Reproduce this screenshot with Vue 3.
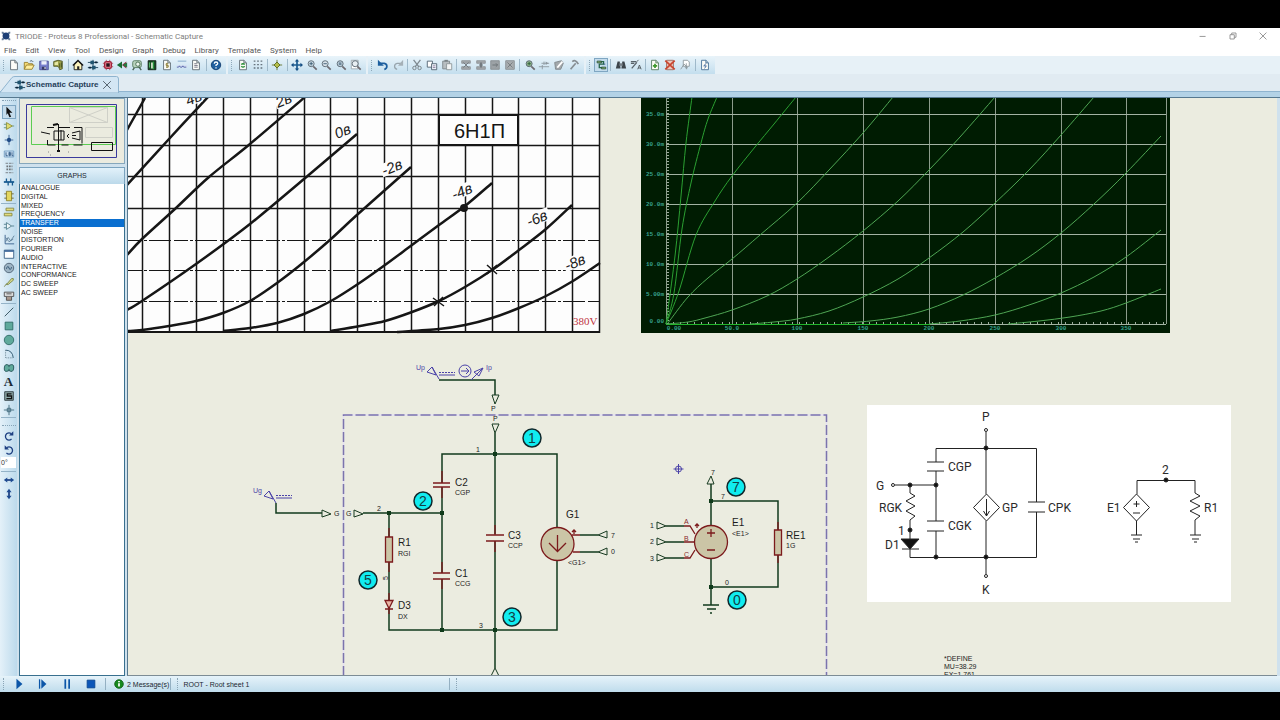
<script setup>
import { ref } from 'vue'

const glass = (x, mark) => `<circle cx="6" cy="5.500" r="3.500" fill="${x}" stroke="#55646e"/><path d="M8.500 8.500L12.500 12.500" stroke="#6d6a70" stroke-width="2"/>${mark}`
const sheet = (mark, c = '#59666e') => `<path d="M3 1.500h5l3 3v8H3z" fill="#fdfdf8" stroke="${c}"/><path d="M8 1.500v3h3" fill="none" stroke="${c}"/>${mark}`
const block = (mark) => `<path d="M2 2h10v3H2zM2 9h10v3H2z" fill="#a2a7ab" stroke="#8d9398"/>${mark}`

const icons = {
  app: '<path d="M3 3l8 8M11 3l-8 8" stroke="#6e86a0" stroke-width="2"/><circle cx="7" cy="7" r="4" fill="#1d3f76"/><path d="M2 2h2v2H2zM10 2h2v2h-2zM2 10h2v2H2zM10 10h2v2h-2z" fill="#6a7f9c"/>',
  file: sheet(''),
  open: '<path d="M1.500 12V4h4l1 1.500H11V7" fill="#f6dc78" stroke="#937b28"/><path d="M1.500 12L4 7h9l-2.500 5z" fill="#ffef9e" stroke="#937b28"/><path d="M8 2.500q3-1.500 4 1" fill="none" stroke="#4c6274"/>',
  save: '<path d="M2 2.500h10v10H2z" fill="#7a80cf" stroke="#4a4d93"/><path d="M4 2.500h6v4H4z" fill="#eef0fb"/><path d="M4.500 9h5v3.500h-5z" fill="#373a66"/><path d="M7.500 9.500h1.500v2h-1.500z" fill="#fff"/>',
  shut: '<path d="M2 3l5-1.500 5 1v9l-3 1-1-3-2-1H2z" fill="#9da24b" stroke="#4e5424"/><path d="M3 4l4-1v4H3z" fill="#e5e7a6"/><path d="M9 5v5M11 4v6" stroke="#3f4c20"/>',
  home: '<path d="M2.500 7L7 2.500 11.500 7v5.500h-9z" fill="#fbf3bd" stroke="#111"/><path d="M1 7.500L7 1.500l6 6" fill="none" stroke="#111" stroke-width="1.500"/><path d="M6 8.500h2.500v4H6z" fill="#222"/>',
  schem: '<path d="M1 4h12M1 10h12M7 1v12" stroke="#153d55"/><path d="M4 2h4v4H4zM6 8h4v4H6z" fill="#1f5470"/><path d="M9 4h3M2 10h3" stroke="#0c2438" stroke-width="2"/>',
  pcb: '<rect x="3" y="3" width="8" height="8" rx="2" fill="#e88391" stroke="#9d1e36" stroke-width="1.500"/><rect x="5" y="5" width="4" height="4" fill="#26121a"/><path d="M1 5h2M1 9h2M11 5h2M11 9h2M5 1v2M9 1v2M5 11v2M9 11v2" stroke="#a9475a"/>',
  view3d: '<path d="M1 7l6-4v8z" fill="#176d33"/><path d="M7 7l5-4v8z" fill="#8f3142"/><path d="M8 7l5-3v6z" fill="#247c42"/>',
  gerber: '<rect x="2" y="2" width="10" height="8" rx="2" fill="#b8d3bd" stroke="#4f7659"/><circle cx="8" cy="6" r="2.500" fill="#eef7ee" stroke="#3d6547"/><path d="M4 10l-2 3M9 9l3 4" stroke="#476251" stroke-width="1.500"/>',
  explore: '<path d="M2.500 2h9v10.500h-9z" fill="#174b25" stroke="#0b190e"/><path d="M6 4h2v7H6z" fill="#e7f0dc"/><path d="M8.500 3v9" stroke="#2fb649"/><path d="M4 4v6" stroke="#63cc76"/>',
  bom: sheet('<path d="M8.500 5.500H6v2h2.500v2H6M7 4.500v6" fill="none" stroke="#8a7b31"/>'),
  code: '<path d="M2 2.500h10" stroke="#7ba0c5"/><path d="M1 7h12v3H1z" fill="#d5e0f2"/><path d="M1 9.500h2l1-1.500 1 1.500h2l1-1.500 1 1.500h3" fill="none" stroke="#4d5ca5"/>',
  notes: sheet('<path d="M5 5.500h3M5 7.500h4M5 9.500h4" stroke="#667"/>'),
  help: '<circle cx="7" cy="7" r="5.500" fill="#1f5f9f" stroke="#0d386b"/><path d="M5 5.500q0-2 2-2t2 1.700q0 1.200-2 2v1M7 9.500v1.500" fill="none" stroke="#fff" stroke-width="1.500"/>',
  redraw: sheet('<path d="M5 6.500q2-2 4 0M9 8.500q-2 2-4 0" fill="none" stroke="#268a32" stroke-width="1.500"/>'),
  grid: '<path d="M2 2.500h11M2 6.500h11M2 10.500h11" stroke="#66737d" stroke-width="1.500" stroke-dasharray="2 2"/>',
  origin: '<path d="M7 1v12M1 7h12" stroke="#5d6f22"/><path d="M7 3.500L10.500 7 7 10.500 3.500 7z" fill="#b2bc49" stroke="#56651e"/>',
  pan: '<path d="M7 2v10M2 7h10" stroke="#1d5c91" stroke-width="2"/><path d="M7 0l2.500 3h-5zM7 14l2.500-3h-5zM0 7l3-2.500v5zM14 7l-3-2.500v5z" fill="#174f84"/>',
  zin: glass('#c8d9e4', '<path d="M4 5.500h4M6 3.500v4" stroke="#35566d"/>'),
  zout: glass('#d8e1e8', '<path d="M4 5.500h4" stroke="#35566d"/>'),
  zall: glass('#b9cbd8', '<path d="M4.500 4h3v3h-3z" fill="#6e8799"/>'),
  zarea: `<path d="M1.500 1.500h8v10h-8z" fill="#fff" stroke="#98a3aa"/>${glass('#e8eef2', '')}`,
  undo: '<path d="M3 5h5.500q3 .5 3 3.500t-3 3.500" fill="none" stroke="#1d5f9f" stroke-width="2"/><path d="M1 1v7h7z" fill="#1d5f9f"/>',
  redo: '<path d="M11 5H6q-3 .5-3 3.500t3 3.500" fill="none" stroke="#98a5ad" stroke-width="1.500"/><path d="M13 1v7H7z" fill="#a5b0b7"/>',
  cut: '<path d="M3 1l6 8M11 1L5 9" stroke="#7f8a91" stroke-width="1.500"/><circle cx="4" cy="10.500" r="2" fill="none" stroke="#737b80"/><circle cx="10" cy="10.500" r="2" fill="none" stroke="#737b80"/>',
  copy: '<path d="M1.500 2.500h6v7h-6z" fill="#fff" stroke="#4a5b6b"/><path d="M6.500 5.500h6v7h-6z" fill="#eef4fa" stroke="#4a5b6b"/><path d="M8 8h3M8 10h3" stroke="#879"/>',
  paste: '<path d="M2 2.500h8v9H2z" fill="#b8bec1" stroke="#7b8386"/><path d="M4 1h4v2H4z" fill="#7b8386"/><path d="M6.500 5.500h6v7h-6z" fill="#f3f5f5" stroke="#8b9396"/>',
  bcopy: block('<path d="M4 4l6 6M10 4l-6 6" stroke="#6c7378"/>'),
  bmove: block('<path d="M5 7h4M7 4v6" stroke="#6f767b" stroke-width="2"/>'),
  brot: '<path d="M2 2h10v10H2z" fill="#9ca2a6" stroke="#868c90"/><path d="M4 7h6M8 5l2 2-2 2" stroke="#686e73" fill="none"/>',
  bdel: '<path d="M2 2h10v10H2z" fill="#a8adb0" stroke="#868c90"/><path d="M4 4l6 6M10 4l-6 6" stroke="#71777b"/>',
  pick: glass('#8fb48f', '<path d="M4 5.500h4M6 3.500v4" stroke="#2b5b35"/>'),
  make: '<path d="M1 9h12M4 5h9M7 3v4M5 7v5" stroke="#8b969d"/><path d="M9 3v4l3-2z" fill="#8b969d"/>',
  pack: '<path d="M2 4l8-2 2 3-3 7H3z" fill="#a3a9ac" stroke="#7d8488"/><path d="M5 10l6-7" stroke="#fff" stroke-width="2"/>',
  decomp: '<path d="M3 12l6-7" stroke="#878e93" stroke-width="2"/><path d="M5 3q4-3 7 3" fill="none" stroke="#878e93" stroke-width="2"/>',
  auto: '<path d="M5 3h5v3H5v4h5" fill="none" stroke="#26654a" stroke-width="1.500"/><path d="M2.500 2.500h5v2h-5zM7.500 9.500h5v2h-5z" fill="#a9cb76" stroke="#234c34"/><path d="M10 6h2" stroke="#2c4c8c"/>',
  find: '<path d="M3 3h2.500l1 8H1zM8.500 3H11l2 8H7.500z" fill="#3d454b"/><path d="M5 5h4v3H5z" fill="#778087"/>',
  prop: '<path d="M2 11l6-7M1 3h6M1 5h4" stroke="#59636a" stroke-width="1.500"/><path d="M7 4l3-3M9 12l2-5 2 5M9.500 10.500h3" fill="none" stroke="#4d5459"/>',
  sheetAdd: sheet('<path d="M4.500 8h5M7 5.500v5" stroke="#3f9a2e" stroke-width="2"/>', '#4f7758'),
  sheetDel: '<path d="M3 1.500h8v11H3z" fill="#ecc7bd" stroke="#97685c"/><path d="M1.500 2l11 10M12.500 2l-11 10" stroke="#c9452f" stroke-width="2"/>',
  exit: '<path d="M5 1.500h5l2 2v5H5z" fill="#fff" stroke="#8a9499"/><path d="M2 12L6 6l3 3v3" fill="none" stroke="#8a9499"/><path d="M8.500 5v6M7 9.500L8.500 11 10 9.500" fill="none" stroke="#8a9499"/>',
  erc: sheet('<path d="M8.500 5L5.500 8h3l-2 3" fill="none" stroke="#335c92"/>', '#3f6b92'),
  arrow: '<path d="M4 1l7 7H7.500l2 4.500-2 .5-2-4.500L4 10.500z" fill="#111"/>',
  comp: '<path d="M4 3l7 4-7 4z" fill="#dfdc72" stroke="#8d8c35"/><path d="M1 5h3M1 9h3M11 7h2" stroke="#5f8d7b"/>',
  junc: '<path d="M7 1v12M2 7h10" stroke="#30588c"/><circle cx="7" cy="7" r="2.500" fill="#204b86"/>',
  lbl: '<path d="M1.500 3.500h11v7h-11z" fill="#cde1f5" stroke="#6f9ac0"/><path d="M3.500 5v4h2M7 5v4h1.500V7H7h1.500V5zM10.500 5v4h1.500" fill="none" stroke="#28527d"/>',
  script: '<path d="M3 1.500h9M3 12.500h9" stroke="#6f7477" stroke-dasharray="3 1"/><path d="M4 5h7M4 8.500h7" stroke="#6d7174" stroke-width="2" stroke-dasharray="2 1"/>',
  bus: '<path d="M1 7h12" stroke="#14588f" stroke-width="2"/><path d="M4 3v4M9 3v4M6 7v4M11 7v4" stroke="#14588f" stroke-width="1.500"/>',
  sub: '<path d="M4 1.500h6v11H4z" fill="#e3d65e" stroke="#8a8029"/><path d="M1.500 4.500H4M1.500 9.500H4M10 4.500h2.500M10 9.500h2.500" stroke="#695d20"/>',
  term: '<path d="M3.500 2.500h9v3h-9zM1.500 8.500h9v3h-9z" fill="#e3dc7c" stroke="#85873e"/>',
  pin: '<path d="M4 3l6 4-6 4zM1 5h3M1 9h3M10 7h3" fill="#eef5f8" stroke="#4d7b8a"/>',
  graph: '<path d="M2.500 1v10.500H13" fill="none" stroke="#315a88"/><path d="M3 9l3-5 3 4 4-6M3 4l4 5 5-3" fill="none" stroke="#5c7c95"/>',
  tape: '<path d="M1.500 2.500h11v9.500h-11z" fill="#fff" stroke="#2e567e"/><path d="M1.500 3.500h11" stroke="#3d689a" stroke-width="2"/>',
  gen: '<circle cx="7" cy="7" r="5.500" fill="#9db4c4" stroke="#4c5f72"/><path d="M4 8q1.500-5 3-1t3-1" fill="none" stroke="#284c6c"/>',
  probe: '<path d="M1.500 12.500l3-4M4 10l6-7q3-1 2 2l-6 5z" fill="#d5d98d" stroke="#768244"/>',
  instr: '<path d="M1.500 2.500h11v5h-11z" fill="#dedede" stroke="#494949"/><path d="M4 4.500h6M4 8v4h6V8" fill="#a9988d" stroke="#494949"/>',
  line: '<path d="M2 12L12 2" stroke="#27444f"/>',
  box: '<path d="M2.500 2.500h9v9h-9z" fill="#5faa9c" stroke="#2d6764"/>',
  circle: '<circle cx="7" cy="7" r="5.500" fill="#5faa9c" stroke="#2d6764"/>',
  arc: '<path d="M3 2.500q8 0 9 9" fill="none" stroke="#214b63"/><path d="M3 2.500v9h9" fill="none" stroke="#5d7886" stroke-dasharray="1 1"/>',
  path: '<path d="M7 4q-5-3-5.500 3T7 10q5 3 5.500-3T7 4z" fill="#5faa9c" stroke="#224e54"/><path d="M7 4v2M7 8v2" stroke="#224e54"/>',
  symbol: '<path d="M2 2h10v10H2z" fill="#8ea9a8" stroke="#263238"/><path d="M10 4.500H5v2.500h5v3H4" fill="none" stroke="#111" stroke-width="1.500"/>',
  marker: '<path d="M7 1v12M1 7h12" stroke="#3b6577"/><path d="M5 5h4v4H5z" fill="none" stroke="#3b6577"/>',
  cw: '<path d="M10 10.500q-3 2.500-6 0-2.500-3.500.5-6.500Q7 2.500 9.500 4" fill="none" stroke="#1d3f81" stroke-width="1.500"/><path d="M12 1.500v5h-5z" fill="#1d3f81"/>',
  ccw: '<path d="M4 10.500q3 2.500 6 0 2.500-3.500-.5-6.500Q7 2.500 4.500 4" fill="none" stroke="#1d3f81" stroke-width="1.500"/><path d="M2 1.500v5h5z" fill="#1d3f81"/>',
  fliph: '<path d="M4 7h6" stroke="#1d3f81" stroke-width="2"/><path d="M1 7l4-3v6zM13 7L9 4v6z" fill="#1d4a91"/>',
  flipv: '<path d="M7 4v6" stroke="#1d3f81" stroke-width="2"/><path d="M7 1L4 5h6zM7 13L4 9h6z" fill="#1d4a91"/>',
  play: '<path d="M4 1l7 6-7 6z" fill="#0c56a8"/>',
  step: '<path d="M3 1.500v11" stroke="#0c56a8" stroke-width="1.500"/><path d="M5 1.500l6 5.500-6 5.500z" fill="#0c56a8"/>',
  pause: '<path d="M5 1.500v11M9.500 1.500v11" stroke="#0c56a8" stroke-width="2"/>',
  stop: '<path d="M2.500 2.500h9v9h-9z" fill="#0c56b8" stroke="#0a4690"/>',
  info: '<circle cx="7" cy="7" r="5" fill="#188a1e" stroke="#0d5d13"/><path d="M7 6v4M7 3.500V5" stroke="#fff" stroke-width="2"/>',
  min: '<path d="M3 7.500h7" stroke="#888"/>',
  restore: '<path d="M3.500 5.500h5v5h-5zM5.500 5.500v-2h5v5h-2" fill="none" stroke="#888"/>',
  close: '<path d="M3 3l8 8M11 3l-8 8" stroke="#888"/>',
}

const menus = ['File', 'Edit', 'View', 'Tool', 'Design', 'Graph', 'Debug', 'Library', 'Template', 'System', 'Help']
const strips = [
  { name: 'project', items: 'file open save shut | home schem pcb view3d gerber explore bom code notes | help' },
  { name: 'zoom', items: 'redraw grid | origin | pan zin zout zall zarea' },
  { name: 'edit', items: 'undo redo | cut copy paste | bcopy bmove brot bdel | pick make pack decomp' },
  { name: 'design', items: 'auto | find prop | sheetAdd sheetDel exit | erc' },
].map((s) => ({ name: s.name, items: s.items.split(' ') }))
const tools = 'arrow comp junc lbl script bus sub | term pin graph tape gen probe instr | line box circle arc path text symbol marker |'.split(' ')
const graphs = ['ANALOGUE', 'DIGITAL', 'MIXED', 'FREQUENCY', 'TRANSFER', 'NOISE', 'DISTORTION', 'FOURIER', 'AUDIO', 'INTERACTIVE', 'CONFORMANCE', 'DC SWEEP', 'AC SWEEP']
const selected = ref('TRANSFER')
const angle = ref('0°')

// Smooth line through a list of points (Catmull-Rom to Bezier).
function smooth(p) {
  let d = `M${p[0][0]} ${p[0][1]}`
  for (let i = 0; i < p.length - 1; i++) {
    const a = p[i - 1] || p[i], b = p[i], c = p[i + 1], e = p[i + 2] || c
    d += `C${b[0] + (c[0] - a[0]) / 6} ${b[1] + (c[1] - a[1]) / 6} ${c[0] - (e[0] - b[0]) / 6} ${c[1] - (e[1] - b[1]) / 6} ${c[0]} ${c[1]}`
  }
  return d
}

const scanX = [142, 169, 196, 223, 250, 277, 304, 330, 357, 384, 411, 438, 465, 492, 518, 545, 572, 599]
const scanY = [114, 145, 176, 208]
const scanDash = [240, 270, 301]
const scanCurves = [
  [[127, 130], [145, 98]],
  [[127, 185], [169, 139], [208, 97]],
  [[127, 255], [142, 239], [176, 208], [209, 177], [250, 144], [305, 97]],
  [[127, 310], [142, 301], [196, 264], [250, 224], [304, 179], [357, 134]],
  [[128, 331], [142, 330], [169, 326], [196, 321], [223, 313], [250, 301], [277, 283], [304, 262], [331, 239], [358, 214], [411, 167]],
  [[223, 331], [250, 328], [277, 323], [304, 314], [331, 301], [358, 284], [385, 265], [412, 245], [439, 225], [465, 206], [492, 183]],
  [[331, 331], [360, 326], [385, 321], [412, 312], [439, 301], [465, 287], [492, 270], [519, 250], [546, 229], [572, 205]],
  [[397, 332], [439, 329], [465, 325], [492, 318], [519, 308], [546, 296], [573, 281], [600, 263]],
].map(smooth)
const scanLabels = [
  { t: '4в', x: 188, y: 106 }, { t: '2в', x: 278, y: 108 }, { t: '0в', x: 337, y: 139 },
  { t: '-2в', x: 384, y: 176 }, { t: '-4в', x: 454, y: 200 }, { t: '-6в', x: 529, y: 227 }, { t: '-8в', x: 567, y: 271 },
]
const simX = [666, 732, 797, 863, 929, 995, 1061, 1126, 1166]
const simY = [114, 144, 174, 204, 234, 264, 294, 324]
const simYL = ['35.0m', '30.0m', '25.0m', '20.0m', '15.0m', '10.0m', '5.00m', '0.00']
const simXL = ['0.00', '50.0', '100', '150', '200', '250', '300', '350']
const simCurves = [
  [[666, 324], [675, 256], [681, 196], [686, 143], [692, 97]],
  [[666, 324], [674, 293], [682, 229], [691, 183], [701, 143], [708, 119], [717, 97]],
  [[666, 324], [679, 291], [696, 235], [715, 201], [732, 176], [755, 147], [774, 124], [796, 97]],
  [[668, 323], [688, 297], [708, 278], [732, 259], [760, 235], [797, 203], [829, 170], [863, 133], [893, 97]],
  [[666, 324], [688, 322], [705, 318], [732, 310], [767, 296], [797, 279], [829, 257], [863, 231], [898, 201], [929, 170], [960, 137], [995, 97]],
  [[750, 324], [774, 322], [797, 319], [829, 311], [863, 297], [898, 279], [929, 258], [963, 232], [995, 203], [1029, 170], [1061, 135], [1094, 97]],
  [[843, 323], [870, 321], [898, 317], [929, 309], [963, 295], [995, 278], [1029, 257], [1061, 233], [1094, 204], [1126, 173], [1161, 136]],
  [[929, 324], [960, 321], [995, 315], [1029, 305], [1061, 293], [1094, 277], [1126, 257], [1161, 230]],
  [[1008, 324], [1039, 321], [1070, 317], [1101, 311], [1126, 303], [1161, 289]],
].map(smooth)

const badges = [
  { n: 1, x: 532, y: 438 }, { n: 2, x: 423, y: 501 }, { n: 5, x: 368, y: 580 },
  { n: 3, x: 512, y: 617 }, { n: 7, x: 736, y: 487 }, { n: 0, x: 737, y: 600 },
]
const nodes = [[495, 454], [389, 513], [442, 513], [442, 630], [495, 630], [711, 501], [711, 587]]
const names = [
  ['C2', 455, 486], ['R1', 398, 546], ['C1', 455, 577], ['D3', 398, 609], ['C3', 508, 539],
  ['G1', 566, 518], ['E1', 732, 526], ['RE1', 786, 539],
]
const values = [
  ['CGP', 455, 495], ['RGI', 398, 556], ['CCG', 455, 586], ['DX', 398, 619], ['CCP', 508, 548],
  ['<G1>', 568, 565], ['<E1>', 732, 536], ['1G', 786, 548], ['P', 491, 411], ['P', 493, 421],
  ['G', 334, 516], ['G', 346, 516], ['1', 476, 452], ['2', 377, 511], ['3', 479, 628],
  ['7', 611, 538], ['0', 611, 554], ['1', 650, 528], ['2', 650, 544], ['3', 650, 561],
  ['7', 711, 475], ['7', 721, 499], ['0', 725, 585],
  ['*DEFINE', 944, 661], ['MU=38.29', 944, 669], ['EX=1.761', 944, 677],
]
const circuit = [
  ['P', 982, 421], ['CGP', 948, 471], ['G', 876, 490], ['RGK', 879, 512], ['CGK', 948, 530],
  ['1', 898, 535], ['D1', 885, 549], ['GP', 1002, 512], ['CPK', 1048, 512], ['K', 982, 594],
  ['2', 1162, 474], ['E1', 1107, 512], ['R1', 1204, 512],
]
</script>

<template>
  <div class="screen">
    <header class="title">
      <svg class="ico" viewBox="0 0 14 14" v-html="icons.app" />
      <span class="caption">TRIODE - Proteus 8 Professional - Schematic Capture</span>
      <button v-for="b in ['min', 'restore', 'close']" :key="b" class="win" :aria-label="b">
        <svg class="ico" viewBox="0 0 14 14" v-html="icons[b]" />
      </button>
    </header>
    <nav class="menu">
      <button v-for="m in menus" :key="m">{{ m }}</button>
    </nav>
    <div class="toolbar">
      <div v-for="s in strips" :key="s.name" class="strip" :class="s.name">
        <template v-for="(i, k) in s.items" :key="k">
          <i v-if="i === '|'" class="vsep" />
          <button v-else class="tool" :class="{ on: i === 'auto' }" :aria-label="i">
            <svg class="ico" viewBox="0 0 14 14" v-html="icons[i]" />
          </button>
        </template>
      </div>
    </div>
    <div class="tabs">
      <div class="tab">
        <svg class="tabshape" viewBox="0 0 120 17"><path d="M0 16.500L12 1.500Q13 .5 15 .5H116.500Q118.500 .5 118.500 3V17H0z" fill="#d3e6f4" stroke="#8fb4cf" /></svg>
        <button class="tabname"><svg class="ico" viewBox="0 0 14 14" v-html="icons.schem" />Schematic Capture</button>
        <button class="tabx" aria-label="Close tab"><svg class="ico" viewBox="0 0 14 14"><path d="M2.500 2.500l9 9M11.500 2.500l-9 9" stroke="#45525c" /></svg></button>
      </div>
    </div>

    <main class="work">
      <aside class="side">
        <i class="hgrip" />
        <template v-for="(i, k) in tools" :key="k">
          <i v-if="i === '|'" class="hsep" />
          <button v-else class="tool" :class="{ on: i === 'arrow' }" :aria-label="i">
            <span v-if="i === 'text'" class="letter">A</span>
            <svg v-else class="ico" viewBox="0 0 14 14" v-html="icons[i]" />
          </button>
        </template>
        <i class="hgrip low" />
        <button v-for="i in ['cw', 'ccw']" :key="i" class="tool" :aria-label="i"><svg class="ico" viewBox="0 0 14 14" v-html="icons[i]" /></button>
        <input v-model="angle" class="angle" aria-label="Angle" />
        <i class="hsep" />
        <button v-for="i in ['fliph', 'flipv']" :key="i" class="tool" :aria-label="i"><svg class="ico" viewBox="0 0 14 14" v-html="icons[i]" /></button>
      </aside>

      <section class="panel">
        <svg class="overview" viewBox="19 98 106 66" fill="none">
          <path d="M69.500 107.500h38v15h-38zl38 15m0-15l-38 15M85.500 127.500h27v10h-27z" stroke="#cfd0c8" />
          <path d="M26.500 104.500h90v53h-90z" stroke="#3a3a9c" />
          <path d="M31.500 106.500h84v38h-84z" stroke="#5ccc52" />
          <path d="M91.500 142.500h21v8h-21z" stroke="#111" />
          <path d="M47 127.500h7m4 0h12m4 0h8v16M47.500 140v5h8m6 0h7m5 0h9M41 132l9 2M54 131h10v9h-10zM58.500 124v27M61 130v10M69 134l-2 2 2 2M72 133l8-2v9l-8-2M72 135.500h4" stroke="#111" />
          <path d="M53 125l5-1M57 151h3" stroke="#111" stroke-width="2" />
          <path d="M48 152h1m1 3h1m17-3h1" stroke="#888" />
        </svg>
        <h2>GRAPHS</h2>
        <div class="listbox">
          <ul>
            <li v-for="g in graphs" :key="g"><button :class="{ sel: g === selected }" @click="selected = g">{{ g }}</button></li>
          </ul>
        </div>
      </section>

      <svg class="canvas" role="img" aria-label="Schematic sheet">
        <g transform="translate(-128 -98)">
          <!-- printed anode characteristics -->
          <path d="M128 98h472v235H128z" fill="#fdfdfd" />
          <g stroke="#161616" fill="none">
            <path v-for="x in scanX" :key="x" :d="`M${x}.500 98V333`" stroke-width="1.500" />
            <path v-for="y in scanY" :key="y" :d="`M128 ${y}.500H600`" stroke-width="1.500" />
            <path v-for="y in scanDash" :key="y" :d="`M128 ${y}.500H600`" stroke-dasharray="14 2 3 2 22 3" />
            <path d="M128 332H600" stroke-width="2" />
            <path v-for="(c, k) in scanCurves" :key="k" :d="c" stroke-width="2.500" />
            <path d="M439 115h79v30h-79z" fill="#fdfdfd" stroke-width="2" />
            <path d="M487 265l10 9m0-9l-10 9M433 298l11 8m-1-9l-9 9" stroke-width="1.500" />
          </g>
          <circle cx="464" cy="208" r="4" fill="#161616" />
          <g class="hand">
            <g v-for="l in scanLabels" :key="l.t" :transform="`translate(${l.x} ${l.y}) rotate(-22)`">
              <path :d="l.t.length > 2 ? 'M-1-12h25v13h-25z' : 'M-1-12h17v13h-17z'" fill="#fdfdfd" />
              <text>{{ l.t }}</text>
            </g>
          </g>
          <text class="tube" x="454" y="138">6Н1П</text>
          <text class="volt" x="573" y="325">380V</text>

          <!-- simulated characteristics -->
          <path d="M641 98h529v235H641z" fill="#001c02" />
          <g fill="none">
            <path v-for="x in simX" :key="x" :d="`M${x}.500 98V324`" stroke="#8c9c8c" />
            <path v-for="y in simY" :key="y" :d="`M666 ${y}.500H1166`" stroke="#a3b3a3" />
            <path d="M668 98V324" stroke="#9cac9c" stroke-width="2" stroke-dasharray="1 2" />
            <path d="M666 323H1166" stroke="#9cac9c" stroke-width="2" stroke-dasharray="1 6" />
            <path d="M666 324.500H930" stroke="#22b52c" />
            <path v-for="(c, k) in simCurves" :key="k" :d="c" :stroke="k < 3 ? '#2ba032' : '#4fa654'" />
          </g>
          <g class="sim">
            <text v-for="(t, k) in simYL" :key="t" x="664" :y="k === 7 ? 323 : simY[k] + 2" text-anchor="end">{{ t }}</text>
            <text v-for="(t, k) in simXL" :key="t" :x="k ? simX[k] : 674" y="330" text-anchor="middle">{{ t }}</text>
          </g>

          <!-- subcircuit frame -->
          <g fill="none" stroke-width="1.500">
            <path d="M343.500 676V415H826.500V676" stroke="#e4e0f2" />
            <path d="M343.500 676V415H826.500V676" stroke="#7b74ad" stroke-dasharray="10 3" />
          </g>

          <!-- wires -->
          <g class="wire">
            <path d="M439 380H495V395M495 433V534M495 541V668M442 483V454H557V527M442 487V573M442 579V630M363 513H442M389 513V537M389 562V600M389 609V630H557V560M276 503V513H322" />
            <path d="M580 535H598M580 552H598M711 484V525M711 558V605M711 501H778V530M778 555V587H711M666 526H684M666 542H684M666 558H684" />
            <path d="M703 605H719M707 609H716M710 613H712" />
          </g>
          <g class="thin">
            <path d="M492 395h7l-4 9zM492 424h7l-4 9zM354 510v7l9-3zM322 510v7l9-3zM491 676l4-8 4 8M598 535l9-4v7zM598 552l9-4v7zM711 476l-4 8h7zM657 522v7l9-3zM657 538v7l9-3zM657 554v7l9-3z" />
          </g>
          <path v-for="n in nodes" :key="n.join()" :d="`M${n[0] - 2} ${n[1] - 2}h4v4h-4z`" fill="#0f3a1a" />

          <!-- parts -->
          <g class="part">
            <path d="M442 471V483M433 483H450M433 487H450M442 487V498M442 562V573M433 573H450M433 579H450M442 579V589M495 525V535M486 535H504M486 541H504M495 541V552" />
            <path d="M389 528v9M389 562v10M389 593v7M389 609v5M778 522v8M778 555v8" />
            <path d="M385.500 537h7v25h-7zM774.500 530h7v25h-7z" class="body" />
            <path d="M385 600.500h8l-4 8zM385 609h8" fill="#e9b5a5" />
            <circle cx="557.500" cy="544" r="16.500" class="body" />
            <path d="M557.500 535V551M549 543l8.500 8.500 8.500-8.500M572 535H580M573 552H580M574 534v-4m-2 2l2-2 2 2" />
            <circle cx="711" cy="542" r="16.500" class="body" />
            <path d="M711 529v8m-4-4h8M707 550h8M684 526H690L695 534M684 542H695M684 558H690L695 550M697 528v-4m-2 2l2-2 2 2" />
          </g>
          <g class="pins"><text x="684" y="524">A</text><text x="684" y="541">B</text><text x="684" y="557">C</text></g>

          <!-- sources and probes -->
          <g class="gen">
            <path d="M432 367l-5 5 9 3zl7 12M439 375h16M269 491l-5 5 9 3zl7 12M276 498h16M483 368l-9 4 5 4zL471 380M678.500 464v10M673.500 469h10" />
            <path d="M439 372.500h16M276 495.500h16" stroke-dasharray="2 1" />
            <circle cx="465" cy="371" r="6" /><path d="M461 371h8m-3-3l3 3-3 3" />
            <circle cx="678.500" cy="469" r="3" />
          </g>
          <g class="gentext"><text x="416" y="370">Up</text><text x="486" y="370">Ip</text><text x="253" y="493">Ug</text></g>
          <g class="badge">
            <template v-for="b in badges" :key="b.n">
              <circle :cx="b.x" :cy="b.y" r="9" /><text :x="b.x" :y="b.y + 5">{{ b.n }}</text>
            </template>
          </g>
          <g class="name"><text v-for="n in names" :key="n[0]" :x="n[1]" :y="n[2]">{{ n[0] }}</text></g>
          <g class="value">
            <text v-for="(n, k) in values" :key="k" :x="n[1]" :y="n[2]">{{ n[0] }}</text>
            <text transform="translate(388 580) rotate(-90)">5</text>
          </g>

          <!-- triode model -->
          <path d="M867 405h364v197H867z" fill="#fff" />
          <g class="model">
            <path d="M986 432V494M936 462V448.500H1036.500V502M936 471V521M936 531V557M895 485H936M910 485v8l5 3-9 5 9 5-9 5 9 5-5 4v20M910 549v8.500H1036.500V512M986 521V574" />
            <path d="M927 462h17M927 471h17M927 521h17M927 531h17M902 549h17M1028 502h17M1028 512h17" />
            <path d="M986.500 494l13 13.500-13 13.500-13-13.500zM986.500 499v17m-3-5l3 5 3-5" />
            <path d="M1137 494V480.500H1195V493l5 3-10 5 10 5-10 5 10 5-5 4V535M1136.500 494l13 13.500-13 13.500-13-13.500zM1136.500 501v6m-3-3h6M1133 513h7M1136.500 521V535M1131 535h11M1133 539h7M1135 542h3M1190 535h11M1192 539h7M1194 542h3" />
            <path d="M901 539h18l-9 10z" fill="#111" />
            <circle cx="986" cy="430" r="1.500" /><circle cx="986" cy="576" r="1.500" /><circle cx="893" cy="485" r="1.500" />
            <circle v-for="c in [[986, 448], [936, 485], [910, 485], [910, 530], [936, 557], [986, 557], [1166, 480]]" :key="c.join()" :cx="c[0]" :cy="c[1]" r="2" fill="#111" />
          </g>
          <g class="modeltext"><text v-for="n in circuit" :key="n[0]" :x="n[1]" :y="n[2]">{{ n[0] }}</text></g>
        </g>
      </svg>
    </main>

    <footer class="status">
      <i class="vgrip" />
      <button v-for="i in ['play', 'step', 'pause', 'stop']" :key="i" class="run" :aria-label="i"><svg class="ico" viewBox="0 0 14 14" v-html="icons[i]" /></button>
      <i class="bar" />
      <button class="msg"><svg class="ico" viewBox="0 0 14 14" v-html="icons.info" />2 Message(s)</button>
      <i class="bar" />
      <i class="vgrip" />
      <span class="sheetname">ROOT - Root sheet 1</span>
      <i class="bar" />
      <i class="vgrip" />
    </footer>
  </div>
</template>

<style>
body { margin: 0; background: #000; }
</style>

<style scoped>
.screen { display: flex; flex-direction: column; box-sizing: border-box; min-height: 100vh; padding: 28px 0; background: #000; font-family: "Liberation Sans", Arial, sans-serif; font-size: 7px; color: #1c2730; }
button { display: flex; align-items: center; margin: 0; padding: 0; border: 0; background: none; font: inherit; color: inherit; white-space: nowrap; }
.ico { display: block; width: 12px; height: 12px; flex: none; fill: none; }
.title { display: flex; align-items: center; height: 16px; background: #fff; font: 8px Roboto, sans-serif; color: #7d7d7d; }
.caption { flex: 1; padding-left: 3px; }
.win { justify-content: center; width: 30px; height: 14px; }
.win:last-child { margin-right: 2px; }
.menu { display: flex; gap: 9px; height: 12px; padding-left: 4px; background: #fff; font: 8px Roboto, sans-serif; color: #565656; }
.toolbar { display: flex; gap: 2px; height: 18px; background: #e7f1f7; }
.strip { position: relative; display: flex; align-items: center; justify-content: space-between; box-sizing: border-box; padding: 0 3px 0 8px; background: linear-gradient(#e9f4fa, #c3deee); }
.strip::before { content: ""; position: absolute; left: 3px; top: 4px; bottom: 3px; border-left: 1px dotted #8fa9ba; }
.project { width: 226px; padding-left: 7px; }
.zoom { width: 138px; }
.edit { width: 216px; }
.design { width: 129px; }
.tool { justify-content: center; box-sizing: border-box; width: 14px; height: 14px; flex: none; }
.tool.on { background: #c4dcec; box-shadow: inset 0 0 0 1px #7fa6c2; }
.vsep { width: 4px; height: 12px; background: linear-gradient(#9fb9ca, #9fb9ca) center / 1px 100% no-repeat; }
.tabs { display: flex; align-items: flex-start; box-sizing: border-box; height: 24px; padding-top: 2px; background: #e1ebf2; border-bottom: 1px solid #56788f; box-shadow: inset 0 -5px #b3d2e6, inset 0 -6px #8fb4cf; }
.tab { position: relative; display: flex; align-items: center; width: 120px; height: 17px; padding-left: 14px; box-sizing: border-box; }
.tabshape { position: absolute; left: 0; top: 0; width: 120px; height: 17px; }
.tabname { position: relative; font-weight: bold; font-size: 8px; color: #26405a; }
.tabx { position: relative; margin-left: 3px; }
.work { display: flex; flex: 1; background: #cfe1ed; }
.side { display: flex; flex-direction: column; align-items: center; width: 17px; margin-right: 2px; background: linear-gradient(90deg, #e4f1f9, #bcdaec); }
.hgrip { width: 14px; margin: 2px 0 4px; border-top: 1px dotted #86a3b6; }
.hgrip.low { margin: 6px 0 3px; }
.hsep { width: 15px; height: 1px; margin-bottom: 1px; background: #94b3c8; }
.letter { width: 14px; text-align: center; font: bold 13px "Liberation Serif", serif; color: #1c2c36; }
.angle { width: 15px; height: 11px; margin-bottom: 3px; padding: 0; border: 0; background: #fff; font: 7px "Liberation Sans", sans-serif; color: #333; }
.panel { display: flex; flex-direction: column; width: 106px; margin-right: 2px; }
.overview { display: block; height: 66px; background: #ebebdf; box-shadow: inset 0 0 0 1px #86a7bc; }
h2 { margin: 3px 0 0; height: 16px; border: 1px solid #7ba3bf; border-bottom: 0; background: linear-gradient(#e2f1fa, #bcd9ea); font-size: 7px; line-height: 16px; font-weight: normal; text-align: center; }
.listbox { flex: 1; background: #fff; border: 1px solid #39708f; border-top: 0; }
ul { display: grid; grid-template-rows: repeat(13, 1fr); height: 113px; margin: 0; padding: 0; list-style: none; }
li { display: grid; min-height: 0; }
li button { padding-left: 1px; line-height: 8px; color: #222; }
li .sel { background: #0a6fd0; color: #fff; }
.canvas { display: block; flex: 1; min-width: 0; margin-right: 3px; border-left: 1px solid #56788f; border-bottom: 1px solid #7d8c95; background: #ebece0; font-family: "Liberation Sans", Arial, sans-serif; }
.hand { font-size: 15px; font-style: italic; fill: #1c1c1c; }
.tube { font-size: 20px; fill: #151515; }
.volt { font: 11px "Liberation Serif", serif; fill: #bf3443; }
.sim { font: bold 6px "Liberation Mono", monospace; fill: #37a08c; }
.wire { fill: none; stroke: #123a1d; stroke-width: 1.500; }
.thin { fill: none; stroke: #173a20; }
.part { fill: none; stroke: #7c1a1c; stroke-width: 1.300; }
.body { fill: #cbc5a6; }
.pins { font-size: 7px; fill: #8a2a2c; }
.gen { fill: none; stroke: #4b43a8; }
.gentext { font-size: 7px; fill: #4b43a8; }
.badge circle { fill: #10ecf0; stroke: #10282c; stroke-width: 1.500; }
.badge text { font-size: 14px; text-anchor: middle; fill: #124046; }
.name { font-size: 10px; fill: #1c1c1c; }
.value { font-size: 7px; fill: #222; }
.model { fill: none; stroke: #222; }
.modeltext { font: 12px Roboto, sans-serif; fill: #2b2b2b; }
.status { display: flex; align-items: center; height: 16px; background: linear-gradient(#e6f3fa, #bfdcec); }
.vgrip { height: 12px; margin: 0 5px 0 3px; border-left: 1px dotted #8aa5b6; }
.run { justify-content: center; width: 24px; height: 16px; }
.status > .vgrip:first-child { margin-right: 3px; }
.run + .bar { margin: 0 7px 0 2px; }
.bar { width: 1px; height: 12px; background: #94b0c2; }
.msg { gap: 2px; margin-right: 1px; }
.bar + .vgrip { margin-left: 6px; }
.sheetname { width: 266px; }
</style>
